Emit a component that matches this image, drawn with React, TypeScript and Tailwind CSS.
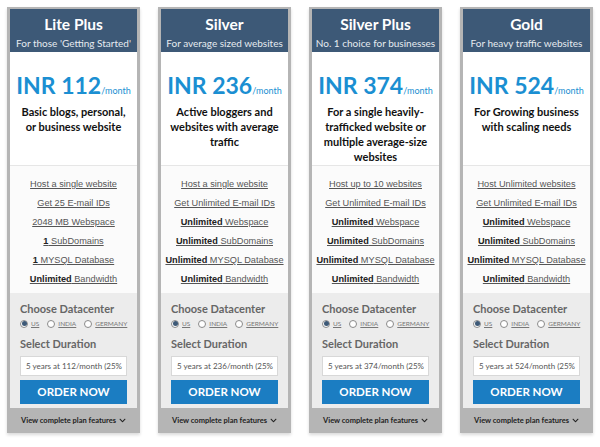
import { FaChevronDown } from "react-icons/fa";

type Feature = { bold?: string; text: string };

type Plan = {
  name: string;
  tagline: string;
  price: string;
  desc: string[];
  features: Feature[];
};

const plans: Plan[] = [
  {
    name: "Lite Plus",
    tagline: "For those 'Getting Started'",
    price: "112",
    desc: ["Basic blogs, personal,", "or business website"],
    features: [
      { text: "Host a single website" },
      { text: "Get 25 E-mail IDs" },
      { text: "2048 MB Webspace" },
      { bold: "1", text: " SubDomains" },
      { bold: "1", text: " MYSQL Database" },
      { bold: "Unlimited", text: " Bandwidth" },
    ],
  },
  {
    name: "Silver",
    tagline: "For average sized websites",
    price: "236",
    desc: ["Active bloggers and", "websites with average", "traffic"],
    features: [
      { text: "Host a single website" },
      { text: "Get Unlimited E-mail IDs" },
      { bold: "Unlimited", text: " Webspace" },
      { bold: "Unlimited", text: " SubDomains" },
      { bold: "Unlimited", text: " MYSQL Database" },
      { bold: "Unlimited", text: " Bandwidth" },
    ],
  },
  {
    name: "Silver Plus",
    tagline: "No. 1 choice for businesses",
    price: "374",
    desc: ["For a single heavily-", "trafficked website or", "multiple average-size", "websites"],
    features: [
      { text: "Host up to 10 websites" },
      { text: "Get Unlimited E-mail IDs" },
      { bold: "Unlimited", text: " Webspace" },
      { bold: "Unlimited", text: " SubDomains" },
      { bold: "Unlimited", text: " MYSQL Database" },
      { bold: "Unlimited", text: " Bandwidth" },
    ],
  },
  {
    name: "Gold",
    tagline: "For heavy traffic websites",
    price: "524",
    desc: ["For Growing business", "with scaling needs"],
    features: [
      { text: "Host Unlimited websites" },
      { text: "Get Unlimited E-mail IDs" },
      { bold: "Unlimited", text: " Webspace" },
      { bold: "Unlimited", text: " SubDomains" },
      { bold: "Unlimited", text: " MYSQL Database" },
      { bold: "Unlimited", text: " Bandwidth" },
    ],
  },
];

function Radio({ label, checked }: { label: string; checked?: boolean }) {
  return (
    <span className="flex items-center gap-[3px]">
      <span className="w-[8px] h-[8px] rounded-full border border-[#8a8a8a] bg-white flex items-center justify-center">
        {checked && <span className="w-[5px] h-[5px] rounded-full bg-[#3d5977]" />}
      </span>
      <span className="text-[6.5px] underline text-[#777] uppercase">{label}</span>
    </span>
  );
}

function PlanCard({ plan }: { plan: Plan }) {
  return (
    <div className="w-[133px] bg-[#b5b5b5] px-[3px] pt-[2px] flex flex-col shadow-[0_2px_3px_rgba(0,0,0,0.15)]">
      {/* header */}
      <div className="h-[43px] bg-[#3d5977] text-white text-center flex flex-col items-center pt-[5px]">
        <div className="text-[15.5px] font-bold leading-[20px]">{plan.name}</div>
        <div className="text-[10px] leading-[12px] mt-[3px] text-[#e6ebf0] whitespace-nowrap">
          {plan.tagline}
        </div>
      </div>

      {/* price */}
      <div className="h-[113px] bg-white flex flex-col items-center pt-[21px]">
        <div className="text-[#1b8fd2] font-bold leading-[24px] whitespace-nowrap">
          <span className="text-[23px]">INR {plan.price}</span>
          <span className="text-[9px] font-normal">/month</span>
        </div>
        <div className="mt-[1px] text-center text-[11px] font-bold leading-[15px] text-[#111]">
          {plan.desc.map((d) => (
            <div key={d}>{d}</div>
          ))}
        </div>
      </div>

      {/* features */}
      <div
        className="h-[128px] bg-[#fbfbfb] border-t border-[#e6e6e6] flex flex-col items-center pt-[11px] gap-[5px]"
        style={{ fontFamily: "'Liberation Sans', Arial, sans-serif" }}
      >
        {plan.features.map((f, i) => (
          <div key={i} className="text-[9.2px] leading-[14px] text-[#555] underline whitespace-nowrap">
            {f.bold && <b className="text-[#222]">{f.bold}</b>}
            {f.text}
          </div>
        ))}
      </div>

      {/* config */}
      <div className="h-[115px] bg-[#ececec] px-[10px] pt-[9px] flex flex-col">
        <div className="text-[11px] font-bold text-[#666] leading-[14px]">Choose Datacenter</div>
        <div className="flex items-center gap-[8px] mt-[3px]">
          <Radio label="US" checked />
          <Radio label="India" />
          <Radio label="Germany" />
        </div>
        <div className="text-[11px] font-bold text-[#666] leading-[14px] mt-[8px]">Select Duration</div>
        <div className="mt-[5px] h-[20px] bg-white border border-[#d8d8d8] flex items-center px-[5px] overflow-hidden">
          <span className="text-[8px] text-[#555] whitespace-nowrap">
            5 years at {plan.price}/month (25%
          </span>
        </div>
        <div className="mt-[4px] h-[24px] bg-[#1b7dc2] text-white text-[11.5px] font-bold flex items-center justify-center">
          ORDER NOW
        </div>
      </div>

      {/* footer */}
      <div className="h-[25px] flex items-center justify-center gap-[3px] text-[7.5px] font-bold text-[#222]">
        View complete plan features
        <FaChevronDown className="w-[7px] h-[7px]" />
      </div>
    </div>
  );
}

export default function App() {
  return (
    <div
      className="w-[600px] h-[447px] bg-white flex items-start gap-[18px] pl-[7px] pt-[7px]"
      style={{ fontFamily: "Lato, 'Open Sans', sans-serif" }}
    >
      {plans.map((p) => (
        <PlanCard key={p.name} plan={p} />
      ))}
    </div>
  );
}
